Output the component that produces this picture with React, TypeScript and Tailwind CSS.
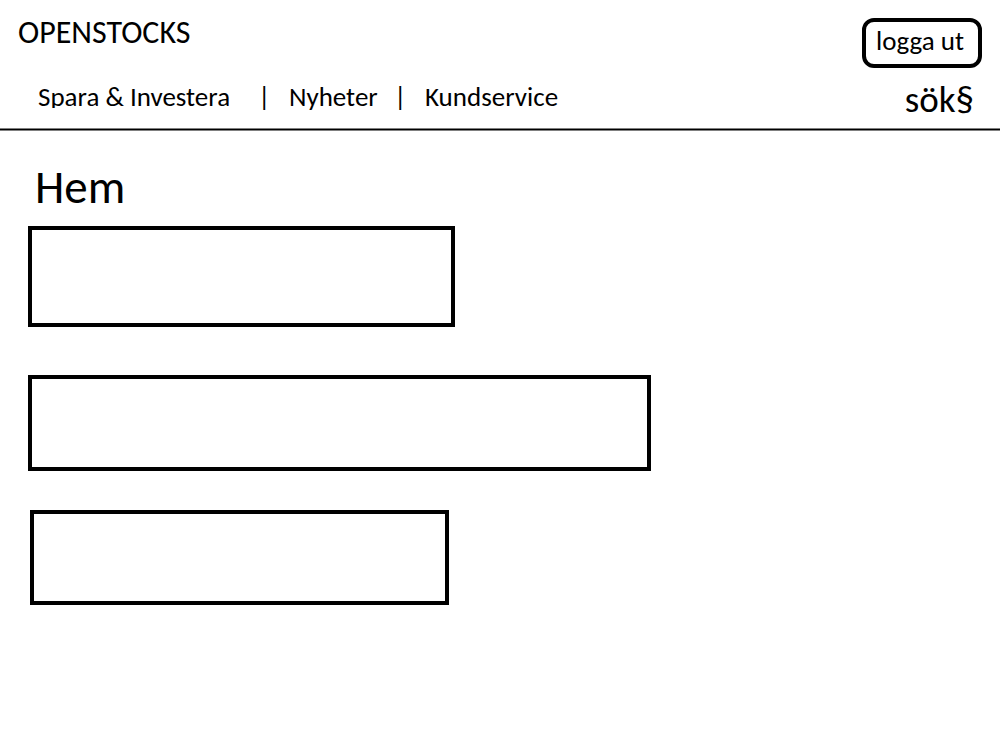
const links = [
  { label: "Spara & Investera", style: "h-[27px] w-[220px] overflow-hidden" },
  { label: "Nyheter", style: "w-[105px]" },
  { label: "Kundservice", style: "" },
];

export default function App() {
  return (
    <div className="min-h-screen bg-white font-['Carlito','Calibri','Lato',sans-serif] text-black">
      <header>
        <div className="flex items-start justify-between px-[18px] pt-[18px]">
          <a href="#" className="text-[32px] leading-[30px]">OPENSTOCKS</a>
          <button type="button" className="h-[50px] w-[120px] rounded-[12px] border-4 border-black pr-1 pb-1 text-[27px] leading-6">
            logga ut
          </button>
        </div>
        <div className="flex h-[60px] items-center justify-between pr-[26px] pl-[38px]">
          <nav className="flex pb-[2px] text-[27px] leading-8">
            {links.map((link, i) => (
              <div key={link.label} className="flex items-start">
                {i > 0 && <span className="w-[31px]">|</span>}
                <a href="#" className={link.style}>{link.label}</a>
              </div>
            ))}
          </nav>
          <a href="#" className="pt-1 text-[37px] leading-10">sök§</a>
        </div>
        <div className="h-[3px] border-y border-[#808080] bg-black" />
      </header>
      <main className="px-7 pt-8">
        <h1 className="pl-[7px] text-[47px] leading-[48px]">Hem</h1>
        <section className="mt-[15px] h-[101px] w-[427px] max-w-full border-4 border-black" />
        <section className="mt-12 h-24 w-[623px] max-w-full border-4 border-black" />
        <section className="mt-[39px] ml-[2px] h-[95px] w-[419px] max-w-full border-4 border-black" />
      </main>
    </div>
  );
}
